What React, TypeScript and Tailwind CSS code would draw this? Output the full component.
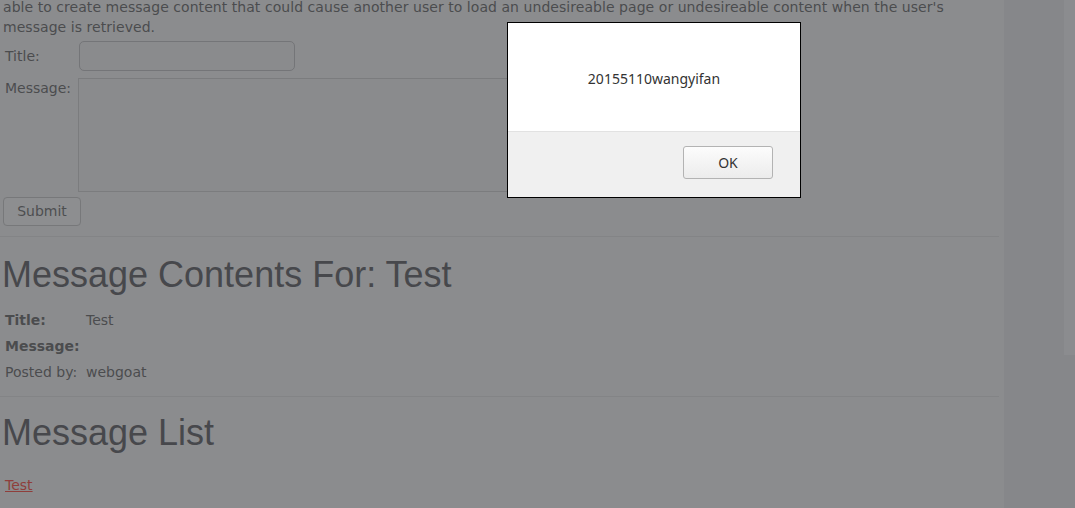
export default function App() {
  return (
    <div className="relative h-[508px] w-[1075px] overflow-hidden bg-[#8b8c8e] font-['DejaVu_Sans',sans-serif] text-[14px] text-[#4b4c4e]">
      <div className="flex h-full">
        {/* page content */}
        <div className="w-[1004px] shrink-0">
          <div className="w-[999px]">
            <p className="-mt-[3px] pl-[3px] leading-[20px] tracking-[0.05px]">
              able to create message content that could cause another user to load an undesireable page or undesireable content when the user's
              <br />
              message is retrieved.
            </p>

            <div className="mt-[4px] grid grid-cols-[74px_1fr] gap-y-[7px] pl-[5px]">
              <div className="self-center leading-[20px]">Title:</div>
              <div className="h-[30px] w-[216px] rounded-[5px] border border-[#747578] bg-[#8a8b8d]" />
              <div className="leading-[20px]">Message:</div>
              <div className="-ml-[1px] h-[114px] w-[500px] border border-[#7b7c7e] bg-[#8a8b8d]" />
            </div>

            <button
              type="button"
              className="ml-[3px] mt-[5px] h-[29px] w-[78px] rounded-[4px] border border-[#77787a] bg-[#8d8e90] pb-[2px] text-[14px] leading-[20px] text-[#4d4e50]"
            >
              Submit
            </button>

            <div className="mt-[10px] h-px bg-[#838486]" />

            <h1 className="mt-[18px] pl-[2px] font-['Liberation_Sans',Arial,sans-serif] text-[36px] leading-[40px] text-[#47484c]">
              Message Contents For: Test
            </h1>

            <div className="mt-[12px] grid grid-cols-[81px_1fr] pl-[5px] leading-[26px]">
              <div className="font-bold">Title:</div>
              <div>Test</div>
              <div className="font-bold">Message:</div>
              <div />
              <div>Posted by:</div>
              <div>webgoat</div>
            </div>

            <div className="mt-[11px] h-px bg-[#838486]" />

            <h1 className="mt-[16px] pl-[2px] font-['Liberation_Sans',Arial,sans-serif] text-[36px] leading-[40px] text-[#47484c]">
              Message List
            </h1>

            <div className="mt-[22px] pl-[5px] leading-[20px]">
              <a href="#" className="text-[#8f3e3b] underline">
                Test
              </a>
            </div>
          </div>
        </div>

        {/* right gutter */}
        <div className="flex flex-1 justify-end bg-[#86878a]">
          <div className="h-[355px] w-[11px] bg-[#8b8c8f]" />
        </div>
      </div>

      {/* alert dialog */}
      <div className="absolute left-[507px] top-[22px] flex h-[176px] w-[294px] flex-col border border-black bg-white font-['Noto_Sans',sans-serif] text-[#333]">
        <div className="flex h-[108px] items-center justify-center pt-[2px] text-[14px]">
          20155110wangyifan
        </div>
        <div className="flex flex-1 items-center justify-end border-t border-[#e2e2e2] bg-[#f0f0f0] pb-[4px] pr-[27px]">
          <button
            type="button"
            className="h-[33px] w-[90px] rounded-[3px] border border-[#b3b3b3] bg-gradient-to-b from-[#fcfcfc] to-[#ececec] text-[14px] text-[#333]"
          >
            OK
          </button>
        </div>
      </div>
    </div>
  );
}
